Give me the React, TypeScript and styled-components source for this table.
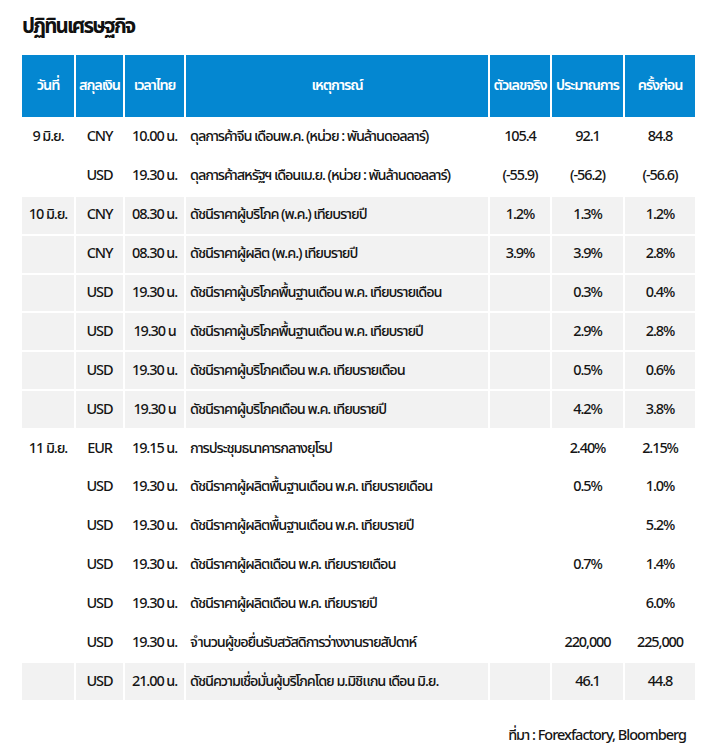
import React from "react";
import styled, { createGlobalStyle } from "styled-components";

const Global = createGlobalStyle`
  html, body { margin: 0; padding: 0; background: #ffffff; }
  body {
    font-family: "Noto Sans Thai", "Noto Sans", sans-serif;
    color: #151515;
  }
`;

const Page = styled.div`
  width: 716px;
  box-sizing: border-box;
  padding: 14px 21px 0 22px;
`;

const Title = styled.h1`
  margin: 0 0 15px 0;
  font-size: 20.5px;
  line-height: 26px;
  font-weight: 700;
  letter-spacing: -1.9px;
  color: #111;
`;

const Table = styled.table`
  width: 673px;
  border-collapse: collapse;
  table-layout: fixed;
  font-size: 14.5px;
  font-weight: 500;
  letter-spacing: -1.1px;
`;

const HeadCell = styled.th`
  height: 62px;
  padding: 0 1px;
  background: #0487d1;
  color: #ffffff;
  font-weight: 600;
  font-size: 14.5px;
  white-space: nowrap;
  text-align: center;
  vertical-align: middle;
  border: 2px solid #ffffff;
  border-top: none;
  &:first-child { border-left: none; }
  &:last-child { border-right: none; }
`;

const Row = styled.tr<{ $shade?: boolean }>`
  background: ${(p) => (p.$shade ? "#f2f2f2" : "#ffffff")};
`;

const Cell = styled.td<{ $align?: "left" | "center" }>`
  height: 36.9px;
  padding: 0 ${(p) => (p.$align === "left" ? "4px" : "2px")};
  text-align: ${(p) => p.$align ?? "center"};
  vertical-align: middle;
  white-space: nowrap;
  border: 2px solid #ffffff;
  color: #151515;
  &:first-child { border-left: none; }
  &:last-child { border-right: none; }
`;

const Source = styled.div`
  margin-top: 23px;
  padding-right: 9px;
  text-align: right;
  font-size: 14.5px;
  font-weight: 500;
  letter-spacing: -1px;
  color: #151515;
`;

type Item = {
  date?: string;
  cur: string;
  time: string;
  event: string;
  actual?: string;
  forecast?: string;
  prev?: string;
  shade?: boolean;
};

const rows: Item[] = [
  { date: "9 มิ.ย.", cur: "CNY", time: "10.00 น.", event: "ดุลการค้าจีน เดือนพ.ค. (หน่วย : พันล้านดอลลาร์)", actual: "105.4", forecast: "92.1", prev: "84.8" },
  { cur: "USD", time: "19.30 น.", event: "ดุลการค้าสหรัฐฯ เดือนเม.ย. (หน่วย : พันล้านดอลลาร์)", actual: "(-55.9)", forecast: "(-56.2)", prev: "(-56.6)" },
  { date: "10 มิ.ย.", cur: "CNY", time: "08.30 น.", event: "ดัชนีราคาผู้บริโภค (พ.ค.) เทียบรายปี", actual: "1.2%", forecast: "1.3%", prev: "1.2%", shade: true },
  { cur: "CNY", time: "08.30 น.", event: "ดัชนีราคาผู้ผลิต (พ.ค.) เทียบรายปี", actual: "3.9%", forecast: "3.9%", prev: "2.8%", shade: true },
  { cur: "USD", time: "19.30 น.", event: "ดัชนีราคาผู้บริโภคพื้นฐานเดือน พ.ค. เทียบรายเดือน", forecast: "0.3%", prev: "0.4%", shade: true },
  { cur: "USD", time: "19.30 น", event: "ดัชนีราคาผู้บริโภคพื้นฐานเดือน พ.ค. เทียบรายปี", forecast: "2.9%", prev: "2.8%", shade: true },
  { cur: "USD", time: "19.30 น.", event: "ดัชนีราคาผู้บริโภคเดือน พ.ค. เทียบรายเดือน", forecast: "0.5%", prev: "0.6%", shade: true },
  { cur: "USD", time: "19.30 น", event: "ดัชนีราคาผู้บริโภคเดือน พ.ค. เทียบรายปี", forecast: "4.2%", prev: "3.8%", shade: true },
  { date: "11 มิ.ย.", cur: "EUR", time: "19.15 น.", event: "การประชุมธนาคารกลางยุโรป", forecast: "2.40%", prev: "2.15%" },
  { cur: "USD", time: "19.30 น.", event: "ดัชนีราคาผู้ผลิตพื้นฐานเดือน พ.ค. เทียบรายเดือน", forecast: "0.5%", prev: "1.0%" },
  { cur: "USD", time: "19.30 น.", event: "ดัชนีราคาผู้ผลิตพื้นฐานเดือน พ.ค. เทียบรายปี", prev: "5.2%" },
  { cur: "USD", time: "19.30 น.", event: "ดัชนีราคาผู้ผลิตเดือน พ.ค. เทียบรายเดือน", forecast: "0.7%", prev: "1.4%" },
  { cur: "USD", time: "19.30 น.", event: "ดัชนีราคาผู้ผลิตเดือน พ.ค. เทียบรายปี", prev: "6.0%" },
  { cur: "USD", time: "19.30 น.", event: "จำนวนผู้ขอยื่นรับสวัสดิการว่างงานรายสัปดาห์", forecast: "220,000", prev: "225,000" },
  { cur: "USD", time: "21.00 น.", event: "ดัชนีความเชื่อมั่นผู้บริโภคโดย ม.มิชิแกน เดือน มิ.ย.", forecast: "46.1", prev: "44.8", shade: true },
];

const widths = [53, 49, 61, 304, 62, 73, 71];
const headers = ["วันที่", "สกุลเงิน", "เวลาไทย", "เหตุการณ์", "ตัวเลขจริง", "ประมาณการ", "ครั้งก่อน"];

export default function App() {
  return (
    <>
      <Global />
      <Page>
        <Title>ปฏิทินเศรษฐกิจ</Title>
        <Table>
          <colgroup>
            {widths.map((w, i) => (
              <col key={i} style={{ width: w }} />
            ))}
          </colgroup>
          <thead>
            <tr>
              {headers.map((h) => (
                <HeadCell key={h}>{h}</HeadCell>
              ))}
            </tr>
          </thead>
          <tbody>
            {rows.map((r, i) => (
              <Row key={i} $shade={r.shade}>
                <Cell>{r.date ?? ""}</Cell>
                <Cell>{r.cur}</Cell>
                <Cell>{r.time}</Cell>
                <Cell $align="left">{r.event}</Cell>
                <Cell>{r.actual ?? ""}</Cell>
                <Cell>{r.forecast ?? ""}</Cell>
                <Cell>{r.prev ?? ""}</Cell>
              </Row>
            ))}
          </tbody>
        </Table>
        <Source>ที่มา : Forexfactory, Bloomberg</Source>
      </Page>
    </>
  );
}
